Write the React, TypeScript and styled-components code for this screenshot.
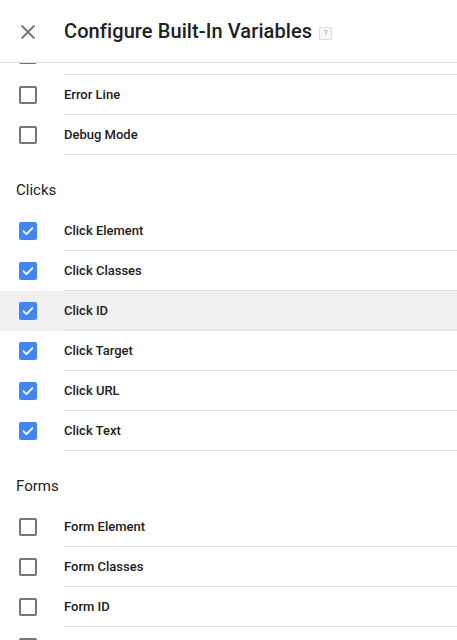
import React, { FC } from 'react'
import styled, { createGlobalStyle } from 'styled-components'

type Variable = {
  name: string
  checked?: boolean
  hovered?: boolean
}

type Section = {
  title?: string
  items: Variable[]
}

const GlobalStyle = createGlobalStyle`
  html, body {
    margin: 0;
    padding: 0;
    background: #fff;
  }
  body {
    font-family: Roboto, "Liberation Sans", Arial, sans-serif;
    color: #212121;
  }
`

const Page = styled.div`
  width: 457px;
  height: 640px;
  display: flex;
  flex-direction: column;
  overflow: hidden;
  background: #fff;
`

const Header = styled.header`
  flex-shrink: 0;
  height: 62px;
  display: flex;
  align-items: center;
  border-bottom: 1px solid #e0e0e0;
`

const CloseButton = styled.button`
  width: 64px;
  height: 62px;
  display: flex;
  align-items: center;
  justify-content: center;
  padding: 0 8px 0 0;
  border: 0;
  background: none;
  color: #757575;
  cursor: pointer;
  margin-top: 1px;
`

const Title = styled.h1`
  margin: 0;
  font-size: 20px;
  font-weight: 500;
  color: #212121;
  letter-spacing: 0.1px;
`

const Help = styled.span`
  display: inline-flex;
  align-items: center;
  justify-content: center;
  width: 11px;
  height: 11px;
  margin-left: 7px;
  margin-top: 4px;
  border: 1px solid #dcdcdc;
  border-radius: 1px;
  background: #f7f7f7;
  color: #9e9e9e;
  font-size: 8px;
  line-height: 1;
`

const List = styled.div`
  flex: 1;
  overflow: hidden;
`

const Scroller = styled.div`
  margin-top: -28px;
`

const Heading = styled.div`
  padding: 25px 0 11px 16px;
  font-size: 15px;
  line-height: 20px;
  color: #212121;
`

const Row = styled.label<{ $hovered?: boolean }>`
  display: flex;
  align-items: stretch;
  height: 40px;
  background: ${({ $hovered }) => ($hovered ? '#f0f0f0' : 'transparent')};
  cursor: pointer;
`

const BoxCell = styled.div`
  width: 64px;
  flex-shrink: 0;
  display: flex;
  align-items: center;
  justify-content: center;
  padding-right: 8px;
  box-sizing: border-box;
  padding-bottom: 1px;
`

const Box = styled.span<{ $checked?: boolean }>`
  width: 18px;
  height: 18px;
  box-sizing: border-box;
  border-radius: 2px;
  border: 2px solid ${({ $checked }) => ($checked ? '#4285f4' : '#757575')};
  background: ${({ $checked }) => ($checked ? '#4285f4' : 'transparent')};
  display: flex;
  align-items: center;
  justify-content: center;
`

const Label = styled.div`
  flex: 1;
  display: flex;
  align-items: center;
  border-bottom: 1px solid #e0e0e0;
  font-size: 13px;
  font-weight: 500;
  color: #212121;
`

// the list is scrolled: the first and last rows are only partly in view
const sections: Section[] = [
  {
    items: [{ name: '' }, { name: 'Error Line' }, { name: 'Debug Mode' }],
  },
  {
    title: 'Clicks',
    items: [
      { name: 'Click Element', checked: true },
      { name: 'Click Classes', checked: true },
      { name: 'Click ID', checked: true, hovered: true },
      { name: 'Click Target', checked: true },
      { name: 'Click URL', checked: true },
      { name: 'Click Text', checked: true },
    ],
  },
  {
    title: 'Forms',
    items: [{ name: 'Form Element' }, { name: 'Form Classes' }, { name: 'Form ID' }, { name: '' }],
  },
]

const Check: FC = () => (
  <svg width="14" height="14" viewBox="0 0 24 24" fill="none">
    <path d="M4.5 12.5l5 5 10-10.5" stroke="#fff" strokeWidth="3" strokeLinecap="round" strokeLinejoin="round" />
  </svg>
)

const VariableRow: FC<Variable> = ({ name, checked, hovered }) => (
  <Row $hovered={hovered}>
    <BoxCell>
      <Box $checked={checked}>{checked && <Check />}</Box>
    </BoxCell>
    <Label>{name}</Label>
  </Row>
)

export default function App() {
  return (
    <Page>
      <GlobalStyle />
      <Header>
        <CloseButton aria-label="Close">
          <svg width="24" height="24" viewBox="0 0 24 24" fill="currentColor">
            <path d="M19 6.41L17.59 5 12 10.59 6.41 5 5 6.41 10.59 12 5 17.59 6.41 19 12 13.41 17.59 19 19 17.59 13.41 12z" />
          </svg>
        </CloseButton>
        <Title>Configure Built-In Variables</Title>
        <Help>?</Help>
      </Header>
      <List>
        <Scroller>
          {sections.map((section, i) => (
            <div key={i}>
              {section.title && <Heading>{section.title}</Heading>}
              {section.items.map((item, j) => (
                <VariableRow key={j} {...item} />
              ))}
            </div>
          ))}
        </Scroller>
      </List>
    </Page>
  )
}
